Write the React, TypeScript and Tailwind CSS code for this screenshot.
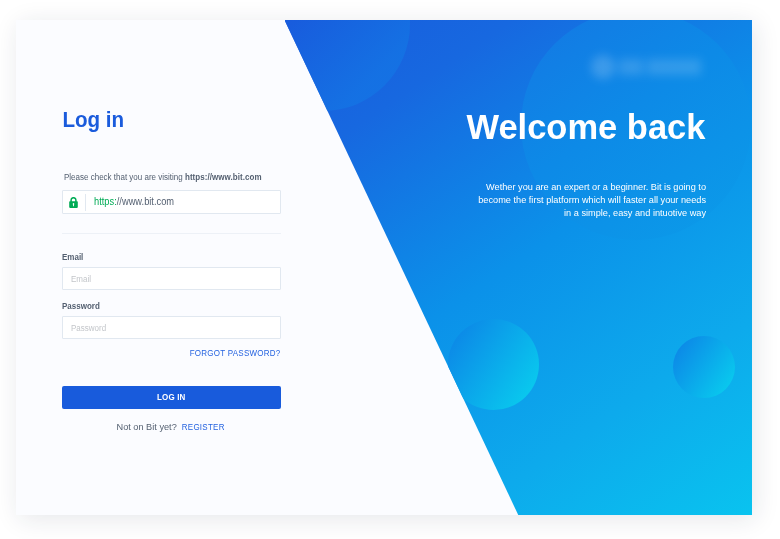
import React from "react";

function LockIcon() {
  return (
    <svg viewBox="0 0 9 11" className="h-[11px] w-[9px]" aria-hidden="true">
      <path d="M2.1 5V3.1a2.4 2.4 0 0 1 4.8 0V5" fill="none" stroke="#00ab55" strokeWidth="1.5" />
      <rect x="0.2" y="4.3" width="8.6" height="6.6" rx="0.8" fill="#00ab55" />
      <path d="M4.5 6.1a.85.85 0 0 1 .45 1.55V9.2h-.9V7.65A.85.85 0 0 1 4.5 6.1Z" fill="#fff" />
    </svg>
  );
}

function Field({ label, type }: { label: string; type: string }) {
  return (
    <label className="block">
      <span className="block h-3 scale-y-108 text-[8px] leading-[13.4px] font-bold text-[#535f70]">{label}</span>
      <span className="mt-1 block h-[23px] rounded-[1px] border border-[#e1e8f0] bg-white">
        <input
          type={type}
          placeholder={label}
          className="block h-[23px] w-full scale-y-108 px-2 text-[8px] text-[#535f70] outline-none placeholder:text-[#c3c6ca]"
        />
      </span>
    </label>
  );
}

function LoginForm() {
  return (
    <form className="ml-[46px] flex w-[218.5px] flex-col pt-[87px] text-[#535f70]">
      <h1 className="h-6 scale-y-104 pl-[0.4px] text-[20.6px] leading-[25.6px] font-bold text-[#1a5bdc]">Log in</h1>
      <p className="mt-[40px] h-3 scale-y-108 pl-0.5 text-[8px] leading-[13.4px] whitespace-nowrap">
        Please check that you are visiting <b className="tracking-[0.05px]">https://www.bit.com</b>
      </p>
      <div className="mt-[7px] flex h-6 items-center rounded-[1px] border border-[#e1e8f0] bg-white">
        <span className="ml-1.5 flex w-4 items-center">
          <LockIcon />
        </span>
        <span className="h-[17px] w-px bg-[#e1e8f0]" />
        <span className="ml-2 block scale-y-108 text-[9.3px] leading-[13px]">
          <span className="text-[#00ab55]">https:</span>//www.bit.com
        </span>
      </div>
      <hr className="mt-[19px] mb-[17px] border-[#edf1f7]" />
      <Field label="Email" type="email" />
      <div className="h-2.5" />
      <Field label="Password" type="password" />
      <a href="#" className="mt-2 h-3 scale-y-108 text-right text-[8px] leading-[13px] tracking-[0.25px] text-[#2563e0]">
        FORGOT PASSWORD?
      </a>
      <button type="button" className="mt-[27px] h-[23px] rounded-[2px] bg-[#185bdc] pt-px text-[8px] font-bold tracking-[0.15px] text-white">
        <span className="block scale-y-108">LOG IN</span>
      </button>
      <p className="mt-3 flex h-3 items-center gap-[5px] pl-[54.5px] text-[9.2px] leading-[13px] whitespace-nowrap">
        <span className="block scale-y-108">Not on Bit yet?</span>
        <a href="#" className="block scale-y-104 pt-px text-[8px] tracking-[0.25px] text-[#2563e0]">REGISTER</a>
      </p>
    </form>
  );
}

function BlurredBrand() {
  return (
    <div className="mr-[51px] flex h-7 items-center justify-end gap-1 opacity-30 blur-[5px]" aria-hidden="true">
      <span className="size-6 rounded-full bg-white/60" />
      <span className="h-4 w-6 bg-white/50" />
      <span className="h-4 w-[54px] bg-white/50" />
    </div>
  );
}

function WelcomePanel() {
  return (
    <section className="relative h-full w-[467.5px] overflow-hidden bg-[linear-gradient(146deg,#185cdd_0%,#1768e0_19%,#0b91e9_49%,#0daaec_76%,#09c3ef_100%)] text-right text-white [clip-path:polygon(0_0,100%_0,100%_100%,50%_100%)]">
      <span className="absolute -top-[83px] -left-[48.5px] size-[174px] rounded-full bg-[linear-gradient(135deg,#185cdd_40%,#1473e4_80%)] opacity-85" />
      <span className="absolute -top-[10px] left-[236.5px] size-[230px] rounded-full bg-[linear-gradient(145deg,#137ae4_8%,#0d8ae7_45%,#0b9be9_95%)]" />
      <span className="absolute top-[298.5px] left-[163px] size-[91px] rounded-full bg-[linear-gradient(125deg,#0c88e7_10%,#09c9ee_88%)]" />
      <span className="absolute top-[315.5px] left-[388.5px] size-[62px] rounded-full bg-[linear-gradient(125deg,#0c88e7_10%,#09c9ee_88%)]" />
      <div className="relative pt-[33px]">
        <BlurredBrand />
        <h2 className="mt-[26px] mr-[46.5px] h-10 scale-y-102 text-[34.5px] leading-10 font-bold whitespace-nowrap">Welcome back</h2>
        <p className="mt-[35px] mr-[46px] scale-y-106 text-[9.2px] leading-3 whitespace-nowrap">
          Wether you are an expert or a beginner. Bit is going to
          <br />
          become the first platform which will faster all your needs
          <br />
          in a simple, easy and intuotive way
        </p>
      </div>
    </section>
  );
}

export default function App() {
  return (
    <div className="h-[539px] w-[780px] overflow-hidden bg-white pt-5 pl-4 font-['Liberation_Sans',Arial,sans-serif]">
      <main className="flex h-[495px] w-[736px] justify-between bg-[#fbfcff] shadow-[3px_4px_24px_rgba(30,40,65,0.11)]">
        <LoginForm />
        <WelcomePanel />
      </main>
    </div>
  );
}
